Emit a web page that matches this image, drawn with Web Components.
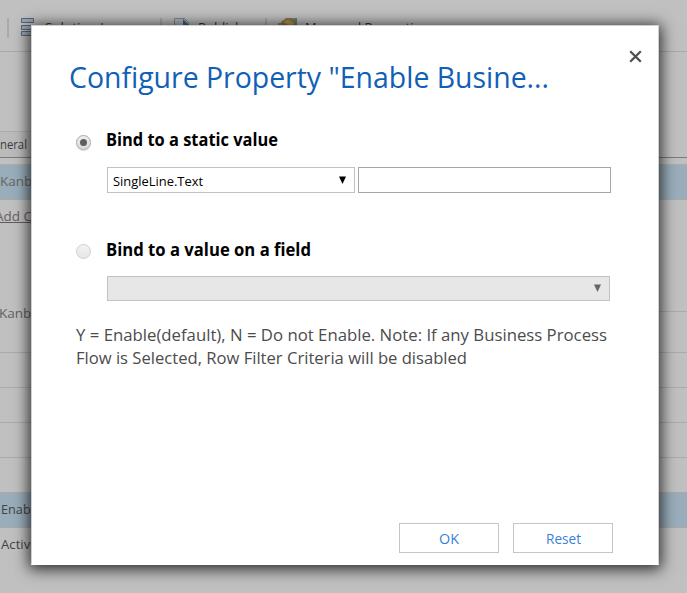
<!DOCTYPE html>
<html lang="en"><head><meta charset="utf-8"><title>Configure Property</title>
<style>
html,body{margin:0;height:100%;overflow:hidden;background:#c0c0c0}
body{font-family:"Open Sans","Noto Sans",sans-serif;display:grid}
customizer-page,property-dialog{grid-area:1/1}
</style></head><body>
<customizer-page></customizer-page>
<property-dialog>
 <fit-text slot="title" width="480">Configure Property "Enable Busine...</fit-text>
 <bind-option checked>
  <fit-text slot="label" width="172">Bind to a static value</fit-text>
  <select-box style="width:248px"><fit-text width="90">SingleLine.Text</fit-text></select-box>
  <text-field></text-field>
 </bind-option>
 <bind-option style="margin-top:44px">
  <fit-text slot="label" width="205">Bind to a value on a field</fit-text>
  <select-box disabled style="width:503px"></select-box>
 </bind-option>
 <div slot="note"><fit-text width="531">Y = Enable(default), N = Do not Enable. Note: If any Business Process</fit-text><fit-text width="391">Flow is Selected, Row Filter Criteria will be disabled</fit-text></div>
 <push-button slot="actions"><fit-text width="20">OK</fit-text></push-button>
 <push-button slot="actions"><fit-text width="35">Reset</fit-text></push-button>
</property-dialog>
<script>
function define(name, html, ready) {
  customElements.define(name, class extends HTMLElement {
    connectedCallback() {
      if (this.shadowRoot) return;
      this.attachShadow({mode: 'open'}).innerHTML = html;
      if (ready) ready(this);
    }
  });
}

// Condenses a single line of text to the width given by its attribute.
const fits = [];
define('fit-text', `<style>:host{display:block;white-space:nowrap;flex:none}
span{display:inline-block;transform-origin:0 50%}</style><span><slot></slot></span>`, el => fits.push(el));

define('tool-item', `<style>:host{display:flex;height:20px;align-items:center;border-left:2px solid #aaa;box-sizing:border-box;color:#343434;font-size:13px;line-height:18px}
::slotted(fit-text){margin-top:-2px}
</style><slot name="icon"></slot><slot></slot>`);

define('grid-row', `<style>:host{display:flex;align-items:center;height:34px;border-bottom:1px solid #aaa;color:#444;font-size:13.5px;white-space:nowrap;flex:none;box-sizing:content-box}
:host([selected]){background:#99adba}::slotted(*){margin-top:-2px}</style><slot></slot>`);

define('customizer-page', `<style>
:host{display:flex;flex-direction:column;background:#c0c0c0;min-width:0;height:593px;overflow:hidden}
.bar{height:33px;padding:18px 0 0 7px;display:flex;border-bottom:1px solid #a9a9a9;flex:none}
tool-item:nth-child(1){width:153px}tool-item:nth-child(2){width:105px}
svg{display:block;margin:0 10px 0 12px;flex:none}
tool-item:nth-child(2) svg{margin-right:7px}
tool-item:nth-child(3) svg{margin:0 7px 0 11px}
.gap{height:79px;flex:none}
.tab{height:25px;width:31px;background:#bbb;border-top:1px solid #adadad;color:#3d3d3d;font-size:13.5px;line-height:25px;flex:none}
.tabs{border-bottom:1px solid #7b7b7b;flex:none}
.space{height:6px;border-bottom:1px solid #acacac;flex:none}
.add{height:111px;color:#675f5f;font-size:13.5px;flex:none}
.add fit-text{height:22px;line-height:32px;border-bottom:1px solid #625b5b;margin-left:-5px}
</style>
<div class="bar">
<tool-item><svg slot="icon" width="14" height="20"><g fill="#9fa9b4" stroke="#55657e"><path d="M.5.5h12v4H.5zM.5 7.500h12v4H.5zM.5 13.500h12v4H.5z"/></g></svg><fit-text width="96">Solution Layers</fit-text></tool-item>
<tool-item><svg slot="icon" width="17" height="20"><path d="M.5 17V.5h10l4 4V17z" fill="#b2bac3" stroke="#7a8998"/><path d="M9 1l6 6H9z" fill="#4e6074"/></svg><fit-text width="45">Publish</fit-text></tool-item>
<tool-item><svg slot="icon" width="20" height="20"><path d="M0 5h7v12H0z" fill="#858585"/><path d="M3 4l5-4h7l4 4v8H5z" fill="#8b7948"/><path d="M5 4l5-2 6 3-3 4z" fill="#b29b59"/><path d="M16 0h3v8h-3z" fill="#6d8065"/></svg><fit-text width="122">Managed Properties</fit-text></tool-item>
</div>
<div class="gap"></div>
<div class="tabs"><div class="tab"><fit-text width="27">neral</fit-text></div></div>
<div class="space"></div>
<grid-row selected style="color:#656565"><fit-text width="90">Kanban Board</fit-text></grid-row>
<div class="add"><fit-text width="75">Add Control</fit-text></div>
<div style="height:1px;background:linear-gradient(90deg,transparent 600px,#aaa 600px);flex:none"></div>
<grid-row style="height:40px;color:#606060"><fit-text width="90" style="position:relative;top:-18px;left:-1px">Kanban Board</fit-text></grid-row>
<grid-row></grid-row><grid-row></grid-row><grid-row></grid-row><grid-row></grid-row>
<grid-row selected><fit-text width="126" style="margin-left:1px">Enable Business Flow</fit-text></grid-row>
<grid-row style="border:0"><fit-text width="88" style="margin-left:1px">Active Column</fit-text></grid-row>`);

define('close-icon', `<style>:host{display:block;width:13px;height:13px}svg{display:block}</style>
<svg width="13" height="13"><path d="M1.200 1.200l10.600 10.600M11.800 1.200L1.200 11.800" stroke="#505050" stroke-width="2.300"/></svg>`);

define('bind-option', `<style>
:host{display:grid;grid-template-columns:31px 1fr;row-gap:13px}
:host([checked]){row-gap:14px}
i{width:15px;height:15px;border-radius:50%;box-sizing:border-box;border:1px solid #d0d0d0;background:linear-gradient(#f2f2f2,#e6e6e6);margin-top:7px;display:grid;place-items:center}
:host([checked]) i{margin-top:8px;border-color:#a9a9a9;background:linear-gradient(#eee,#dcdcdc);box-shadow:0 1px 1px #ddd}
:host([checked]) i::after{content:"";width:7px;height:7px;border-radius:50%;background:#606060}
.l{font:bold 17px/26px "Open Sans",sans-serif;color:#000;margin-left:-1px}
.f{grid-column:2;display:flex;gap:3px}
</style><i></i><div class="l"><slot name="label"></slot></div><div class="f"><slot></slot></div>`);

define('select-box', `<style>
:host{display:flex;align-items:center;justify-content:space-between;box-sizing:border-box;height:26px;border:1px solid #c2c2c2;padding:0 8px 0 5px;font-size:13.5px;color:#000;background:#fff}
:host([disabled]){background:#e7e7e7;color:#666;height:25px}
::slotted(*){margin-top:2px}
svg{margin-left:auto;display:block;position:relative;top:-.5px}</style><slot></slot><svg width="7" height="8"><path d="M0 .5h7L3.500 8z" fill="currentColor"/></svg>`);

define('text-field', `<style>:host{display:block;box-sizing:border-box;width:253px;height:26px;border:1px solid #a6a6a6;background:#fff}</style>`);

define('push-button', `<style>:host{display:flex;align-items:center;justify-content:center;box-sizing:border-box;width:100px;height:30px;border:1px solid #c5c5c5;font-size:15px;color:#3a7fd8}</style><slot></slot>`);

define('property-dialog', `<style>
:host{position:relative;z-index:1;display:flex;flex-direction:column;box-sizing:border-box;width:628px;height:540px;margin:25px 0 0 31px;background:#fff;border:1px solid #d0d0d0;border-bottom-color:#fff;box-shadow:0 2px 14px 2px rgba(0,0,0,.8)}
header{display:flex;justify-content:space-between;padding:31px 16px 0 37px;height:70px;box-sizing:border-box;font-size:30px;line-height:40px;color:#1160b7}
close-icon{margin-top:-7px}
main{padding:31px 0 0 44px}
.note{font-size:17px;line-height:23px;color:#4c4c4c;margin-top:22px}
footer{margin-top:auto;padding:0 45px 11px 0;display:flex;justify-content:flex-end;gap:14px}
</style>
<header><slot name="title"></slot><close-icon></close-icon></header>
<main><slot></slot><div class="note"><slot name="note"></slot></div></main>
<footer><slot name="actions"></slot></footer>`);

for (const el of fits) {
  const span = el.shadowRoot.querySelector('span'), w = +el.getAttribute('width');
  const natural = span.getBoundingClientRect().width;
  span.style.transform = `scaleX(${w / natural})`;
  el.style.width = w + 'px';
}
</script></body></html>
